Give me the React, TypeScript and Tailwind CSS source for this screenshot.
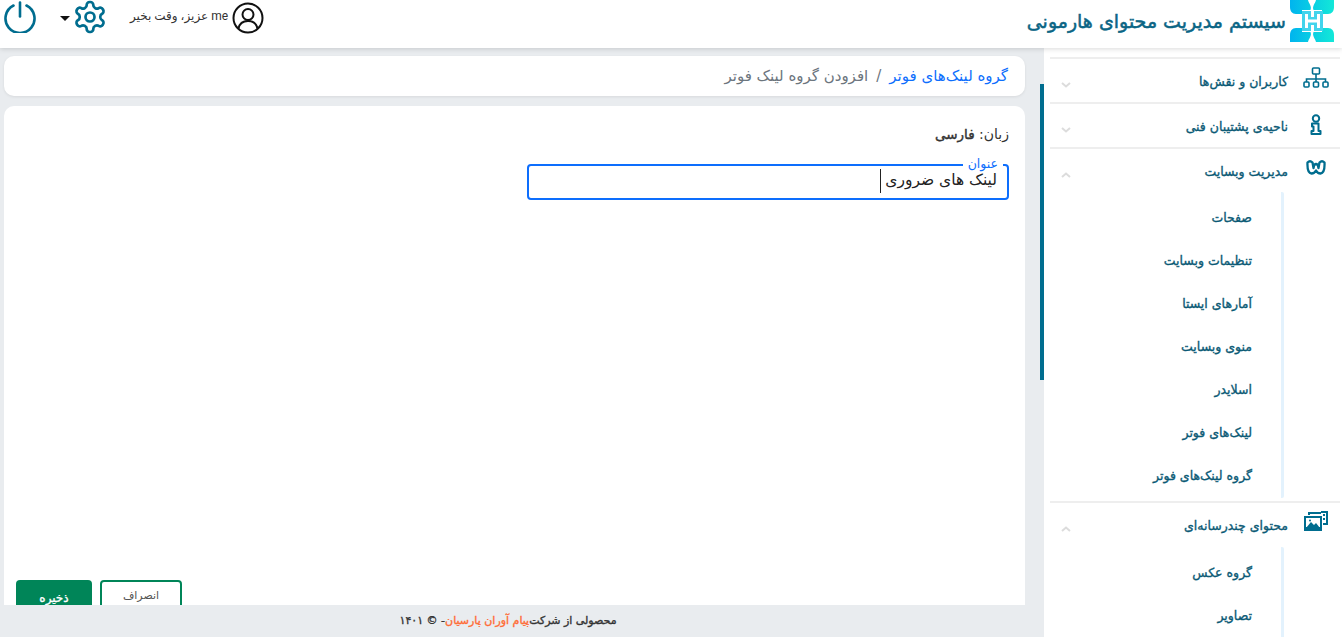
import React from "react";

const F = "font-['DejaVu_Sans','Noto_Sans',sans-serif]";
const TEAL = "#006d8f";

function Logo() {
  return (
    <svg width="44" height="42" viewBox="0 0 44 42">
      <defs>
        <linearGradient id="lg" x1="0" y1="0" x2="1" y2="0">
          <stop offset="0" stopColor="#00b4ee" />
          <stop offset="1" stopColor="#13e8d8" />
        </linearGradient>
      </defs>
      <path
        fill="url(#lg)"
        d="M0 0H18C19 4 22 6 20.500 10H12V14H6C2 14 0 11 0 7ZM44 0H26C25 4 22 6 23.500 10H32V14H38C42 14 44 11 44 7ZM0 42H18C19 38 22 36 20.500 32H12V28H6C2 28 0 31 0 35ZM44 42H26C25 38 22 36 23.500 32H32V28H38C42 28 44 31 44 35Z"
      />
      <path d="M12 11h9v6h3v-6h9v20h-9v-6h-3v6h-9z" fill="#42d4ec" />
      <path d="M15 14h3v14h-3zM27 14h3v14h-3zM18 19.500h9v3h-9z" fill="#fff" />
    </svg>
  );
}

function Chevron({ up }: { up?: boolean }) {
  return (
    <svg width="10" height="6" viewBox="0 0 10 6">
      <path d={up ? "M1 5l4-3.500L9 5" : "M1 1l4 3.500L9 1"} fill="none" stroke="#dcdcdc" strokeWidth="2" />
    </svg>
  );
}

function OrgIcon() {
  return (
    <svg width="26" height="22" viewBox="0 0 26 22" fill="none" stroke={TEAL} strokeWidth="1.6">
      <rect x="9.500" y="1" width="7" height="6" rx="1" />
      <path d="M13 7v5M3.500 15v-3h19v3M13 12v3" />
      <rect x="1" y="15" width="5" height="5" rx="1" />
      <rect x="10.500" y="15" width="5" height="5" rx="1" />
      <rect x="20" y="15" width="5" height="5" rx="1" />
    </svg>
  );
}

function InfoIcon() {
  return (
    <svg width="12" height="21" viewBox="0 0 12 21" fill="none" stroke={TEAL} strokeWidth="2" className="mt-[2px]">
      <circle cx="6" cy="4.500" r="3.200" />
      <path d="M2 9.500h6.500v7.500H10.500v3h-9v-3h2v-4.500H2z" strokeLinejoin="round" />
    </svg>
  );
}

function WIcon() {
  return (
    <svg width="20" height="16" viewBox="0 0 20 16" fill="none" stroke={TEAL} strokeWidth="2.300" className="mt-[2px]">
      <path
        d="M1.500 3.500Q4 1 6.500 3.500L7.500 9Q8 5 10 5Q12 5 12.500 9L13.500 3.500Q16 1 18.500 3.500Q19 14 14.500 14.500Q11.500 14.500 10 11.500Q8.500 14.500 5.500 14.500Q1 14 1.500 3.500Z"
        strokeLinejoin="round"
      />
    </svg>
  );
}

function MediaIcon() {
  return (
    <svg width="26" height="22" viewBox="0 0 26 22">
      <path d="M5 1h13v2H5zM5 1h2v3H5z" fill={TEAL} />
      <path d="M18 0h7v14h-5v-2h3V2h-5z" fill={TEAL} />
      <path d="M20 3h2v2h-2zM20 7h2v2h-2z" fill={TEAL} />
      <rect x="1" y="5" width="18" height="15" fill={TEAL} />
      <rect x="3" y="7" width="14" height="9" fill="#fff" />
      <path d="M3 17l5-6 3 3 2-2 4 5z" fill={TEAL} />
      <circle cx="7" cy="9.500" r="1" fill={TEAL} />
    </svg>
  );
}

function PowerIcon() {
  return (
    <svg width="32" height="32" viewBox="0 0 32 32" fill="none" stroke={TEAL} strokeWidth="2.600" strokeLinecap="round">
      <path d="M9.500 4.500a14.500 14.500 0 1 0 13 0" />
      <path d="M16 1.500v14" />
    </svg>
  );
}

function GearIcon() {
  return (
    <svg width="36" height="36" viewBox="0 0 24 24" fill="none" stroke={TEAL} strokeWidth="1.800" strokeLinecap="round" strokeLinejoin="round">
      <path d="M12.220 2h-.440a2 2 0 0 0-2 2v.180a2 2 0 0 1-1 1.730l-.430.250a2 2 0 0 1-2 0l-.150-.080a2 2 0 0 0-2.730.730l-.220.380a2 2 0 0 0 .730 2.730l.150.100a2 2 0 0 1 1 1.720v.510a2 2 0 0 1-1 1.740l-.150.090a2 2 0 0 0-.730 2.730l.220.380a2 2 0 0 0 2.730.730l.150-.080a2 2 0 0 1 2 0l.430.250a2 2 0 0 1 1 1.730V20a2 2 0 0 0 2 2h.440a2 2 0 0 0 2-2v-.180a2 2 0 0 1 1-1.730l.430-.250a2 2 0 0 1 2 0l.150.080a2 2 0 0 0 2.730-.730l.220-.390a2 2 0 0 0-.730-2.730l-.150-.080a2 2 0 0 1-1-1.740v-.500a2 2 0 0 1 1-1.740l.150-.090a2 2 0 0 0 .730-2.730l-.220-.380a2 2 0 0 0-2.730-.730l-.150.080a2 2 0 0 1-2 0l-.430-.250a2 2 0 0 1-1-1.730V4a2 2 0 0 0-2-2z" />
      <circle cx="12" cy="12" r="3" />
    </svg>
  );
}

function UserIcon() {
  return (
    <svg width="32" height="32" viewBox="0 0 32 32" fill="none" stroke="#111" strokeWidth="2">
      <circle cx="16" cy="16" r="14.500" />
      <circle cx="16" cy="12.500" r="5.500" />
      <path d="M6.500 26.500c1-5 5-7.500 9.500-7.500s8.500 2.500 9.500 7.500" />
    </svg>
  );
}

function MenuHead({ icon, label, up, h }: { icon: React.ReactNode; label: string; up?: boolean; h: string }) {
  return (
    <div className={`flex ${h} items-start border-t-2 border-[#eeeeee] mr-[2px] ml-[10px]`}>
      <div className="flex w-[48px] shrink-0 justify-center pt-[8px]">{icon}</div>
      <div className="mr-[4px] mt-[13px] text-[12.500px] leading-[20px] text-[#0b5a75] [-webkit-text-stroke:0.35px]">{label}</div>
      <div className="ml-[11px] mr-auto mt-[23px] flex">
        <Chevron up={up} />
      </div>
    </div>
  );
}

function SubMenu({ items, extra }: { items: string[]; extra?: boolean }) {
  return (
    <div className="mr-[58px] rounded-[2px] border-r-[3px] border-[#e3f2fd] pr-[29px] pt-[5px]">
      {items.map((t) => (
        <div key={t} className="flex h-[43px] items-center text-[12.500px] text-[#0b5a75] [-webkit-text-stroke:0.35px]">
          {t}
        </div>
      ))}
      {extra && <div className="h-[43px]" />}
    </div>
  );
}

export default function App() {
  return (
    <div dir="rtl" className={`${F} flex h-[637px] w-[1342px] flex-col overflow-hidden bg-white`}>
      <header className="relative z-10 flex h-[48px] shrink-0 items-start bg-white pr-[8px] shadow-[0_1px_5px_rgba(0,0,0,0.15)]">
        <div className="flex items-center">
          <Logo />
          <div className="mr-[4px] text-[19px] leading-[40px] text-[#0b6585] [-webkit-text-stroke:0.5px]">سیستم مدیریت محتوای هارمونی</div>
        </div>
        <div dir="ltr" className="mr-auto flex items-start pl-[4px] pt-px">
          <PowerIcon />
          <span className="ml-[24px] mt-[15px] h-0 w-0 border-x-[5px] border-t-[5px] border-x-transparent border-t-[#111]" />
          <span className="ml-[2px] mt-[-2px]">
            <GearIcon />
          </span>
          <span dir="rtl" className="ml-[22px] mt-[7px] font-['Roboto','DejaVu_Sans',sans-serif] text-[12px] leading-[16px] text-[#333]">
            me عزیز، وقت بخیر
          </span>
          <span className="ml-[4px] mt-px">
            <UserIcon />
          </span>
        </div>
      </header>

      <div className="flex min-h-0 flex-1">
        <aside className="relative w-[302px] shrink-0 overflow-hidden bg-white pt-[9px]">
          <MenuHead h="h-[45px]" icon={<OrgIcon />} label="کاربران و نقش‌ها" />
          <MenuHead h="h-[45px]" icon={<InfoIcon />} label="ناحیه‌ی پشتیبان فنی" />
          <MenuHead h="h-[45px]" icon={<WIcon />} label="مدیریت وبسایت" up />
          <SubMenu items={["صفحات", "تنظیمات وبسایت", "آمارهای ایستا", "منوی وبسایت", "اسلایدر", "لینک‌های فوتر", "گروه لینک‌های فوتر"]} />
          <div className="h-[3px]" />
          <MenuHead h="h-[46px]" icon={<MediaIcon />} label="محتوای چندرسانه‌ای" up />
          <SubMenu items={["گروه عکس", "تصاویر"]} extra />
          <div className="absolute left-0 top-0 h-full w-[4px] bg-[#e9ecef]">
            <div className="mt-[36px] h-[296px] w-[4px] bg-[#006d8f]" />
          </div>
        </aside>

        <main className="flex min-w-0 flex-1 flex-col bg-[#e9ecef]">
          <div className="ml-[4px] mr-[15px] mt-[8px] flex h-[40px] shrink-0 items-center rounded-[10px] bg-white px-[17px] text-[15px] shadow-[0_1px_3px_rgba(0,0,0,0.08)]">
            <span className="text-[#0d6efd]">گروه لینک‌های فوتر</span>
            <span className="px-[8px] text-[#6c757d]">/</span>
            <span className="text-[#6c757d]">افزودن گروه لینک فوتر</span>
          </div>
          <section className="ml-[4px] mr-[15px] mt-[10px] flex min-h-0 flex-1 flex-col rounded-t-[10px] bg-white pl-[12px] pr-[16px] pt-[18px]">
            <div className="text-[14px] leading-[20px] text-[#333]">
              زبان: <span className="text-[13.500px] [-webkit-text-stroke:0.4px]">فارسی</span>
            </div>
            <div className="relative mt-[20px] h-[36px] w-[482px] rounded-[4px] border-2 border-[#0d6efd]">
              <span className="absolute right-[4px] top-[-10px] bg-white px-[5px] text-[12.500px] leading-[15px] text-[#0d6efd]">عنوان</span>
              <div className="flex h-[30px] items-center pr-[10px] text-[15.500px] text-[#222]">
                <span>لینک های ضروری</span>
                <span className="mr-[4px] h-[24px] w-px bg-[#222]" />
              </div>
            </div>
            <div className="flex-1" />
            <div dir="ltr" className="flex h-[25px] shrink-0 gap-[8px] overflow-hidden">
              <div className="h-[40px] w-[76px] rounded-[4px] bg-[#008558] pt-[9px] text-center text-[12px] text-white [-webkit-text-stroke:0.35px]">ذخیره</div>
              <div className="h-[40px] w-[82px] rounded-[4px] border-2 border-[#008558] pt-[6px] text-center text-[11px] text-[#555]">انصراف</div>
            </div>
          </section>
          <footer className="flex h-[32px] shrink-0 items-center justify-center pr-[24px] text-[11px] text-[#333] [-webkit-text-stroke:0.35px]">
            <span>محصولی از شرکت</span>
            <span className="text-[#ff6b35]">پیام آوران پارسیان</span>
            <span>- © ۱۴۰۱</span>
          </footer>
        </main>
      </div>
    </div>
  );
}
